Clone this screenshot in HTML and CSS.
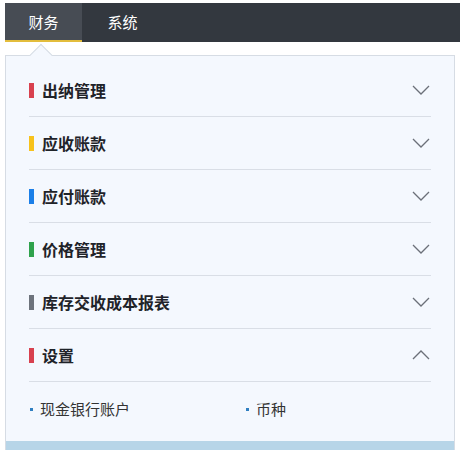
FILE: index.html
```html
<!DOCTYPE html>
<html lang="zh-CN">

<head>
    <meta charset="UTF-8">
    <meta name="viewport" content="width=device-width, initial-scale=1.0">
    <title>财务</title>
    <link rel="stylesheet" href="styles.css">
</head>

<body>

    <div class="nav">
        <div class="tab active">财务</div>
        <div class="tab">系统</div>
    </div>

    <div class="panel">
        <div class="row">
            <span class="mark red"></span>
            <span class="title">出纳管理</span>
            <svg class="arrow" width="18" height="10" viewBox="0 0 18 10"><polyline points="1,1 9,9 17,1" /></svg>
        </div>
        <div class="row">
            <span class="mark yellow"></span>
            <span class="title">应收账款</span>
            <svg class="arrow" width="18" height="10" viewBox="0 0 18 10"><polyline points="1,1 9,9 17,1" /></svg>
        </div>
        <div class="row">
            <span class="mark blue"></span>
            <span class="title">应付账款</span>
            <svg class="arrow" width="18" height="10" viewBox="0 0 18 10"><polyline points="1,1 9,9 17,1" /></svg>
        </div>
        <div class="row">
            <span class="mark green"></span>
            <span class="title">价格管理</span>
            <svg class="arrow" width="18" height="10" viewBox="0 0 18 10"><polyline points="1,1 9,9 17,1" /></svg>
        </div>
        <div class="row">
            <span class="mark gray"></span>
            <span class="title">库存交收成本报表</span>
            <svg class="arrow" width="18" height="10" viewBox="0 0 18 10"><polyline points="1,1 9,9 17,1" /></svg>
        </div>
        <div class="row">
            <span class="mark red"></span>
            <span class="title">设置</span>
            <svg class="arrow" width="18" height="10" viewBox="0 0 18 10"><polyline points="1,9 9,1 17,9" /></svg>
        </div>

        <ul class="subs">
            <li><span class="dot"></span>现金银行账户</li>
            <li><span class="dot"></span>币种</li>
        </ul>

        <div class="footbar"></div>
    </div>

</body>
</html>
```

FILE: styles.css
```css
body {
    margin: 0;
    background-color: #fff;
    font-family: "Microsoft YaHei", "Noto Sans CJK SC", sans-serif;
}

.nav {
    display: flex;
    height: 39px;
    margin: 3px 2px 0 5px;
    background-color: #33383f;
}

.nav .tab {
    width: 77px;
    line-height: 38px;
    text-align: center;
    font-size: 15px;
    color: #fff;
}

.nav .tab.active {
    background-color: #474c54;
    border-bottom: 2px solid #e3bd3c;
    line-height: 37px;
}

.nav .tab + .tab {
    padding-left: 2px;
}

.panel {
    position: relative;
    margin: 13px 7px 0 5px;
    padding: 8px 23px 0 23px;
    background-color: #f4f8fe;
    border: 1px solid #d6dce4;
    border-bottom: none;
}

.panel::before {
    content: "";
    position: absolute;
    top: -9px;
    left: 27px;
    width: 15px;
    height: 15px;
    background-color: #f4f8fe;
    border-top: 1px solid #d6dce4;
    border-left: 1px solid #d6dce4;
    transform: rotate(45deg);
}

.row {
    display: flex;
    align-items: center;
    height: 52px;
    border-bottom: 1px solid #d9dee6;
}

.mark {
    width: 5px;
    height: 15px;
    margin-right: 8px;
}

.mark.red { background-color: #d8414f; }
.mark.yellow { background-color: #f7c21c; }
.mark.blue { background-color: #1b7fe8; }
.mark.green { background-color: #2fa24c; }
.mark.gray { background-color: #6d737c; }

.title {
    flex: 1;
    font-size: 16px;
    font-weight: 700;
    color: #1f2329;
}

.arrow {
    margin-right: 1px;
}

.arrow polyline {
    fill: none;
    stroke: #6b7079;
    stroke-width: 1.3;
}

.subs {
    display: grid;
    grid-template-columns: 216px 216px;
    list-style: none;
    margin: 0;
    padding: 17px 0 22px 0;
}

.subs li {
    display: flex;
    align-items: center;
    line-height: 20px;
    font-size: 15px;
    color: #333;
}

.subs .dot {
    width: 3px;
    height: 3px;
    margin: 0 7px 0 1px;
    background-color: #2f7fc1;
}

.footbar {
    height: 9px;
    margin: 0 -23px;
    background-color: #b7d5e8;
}
```
